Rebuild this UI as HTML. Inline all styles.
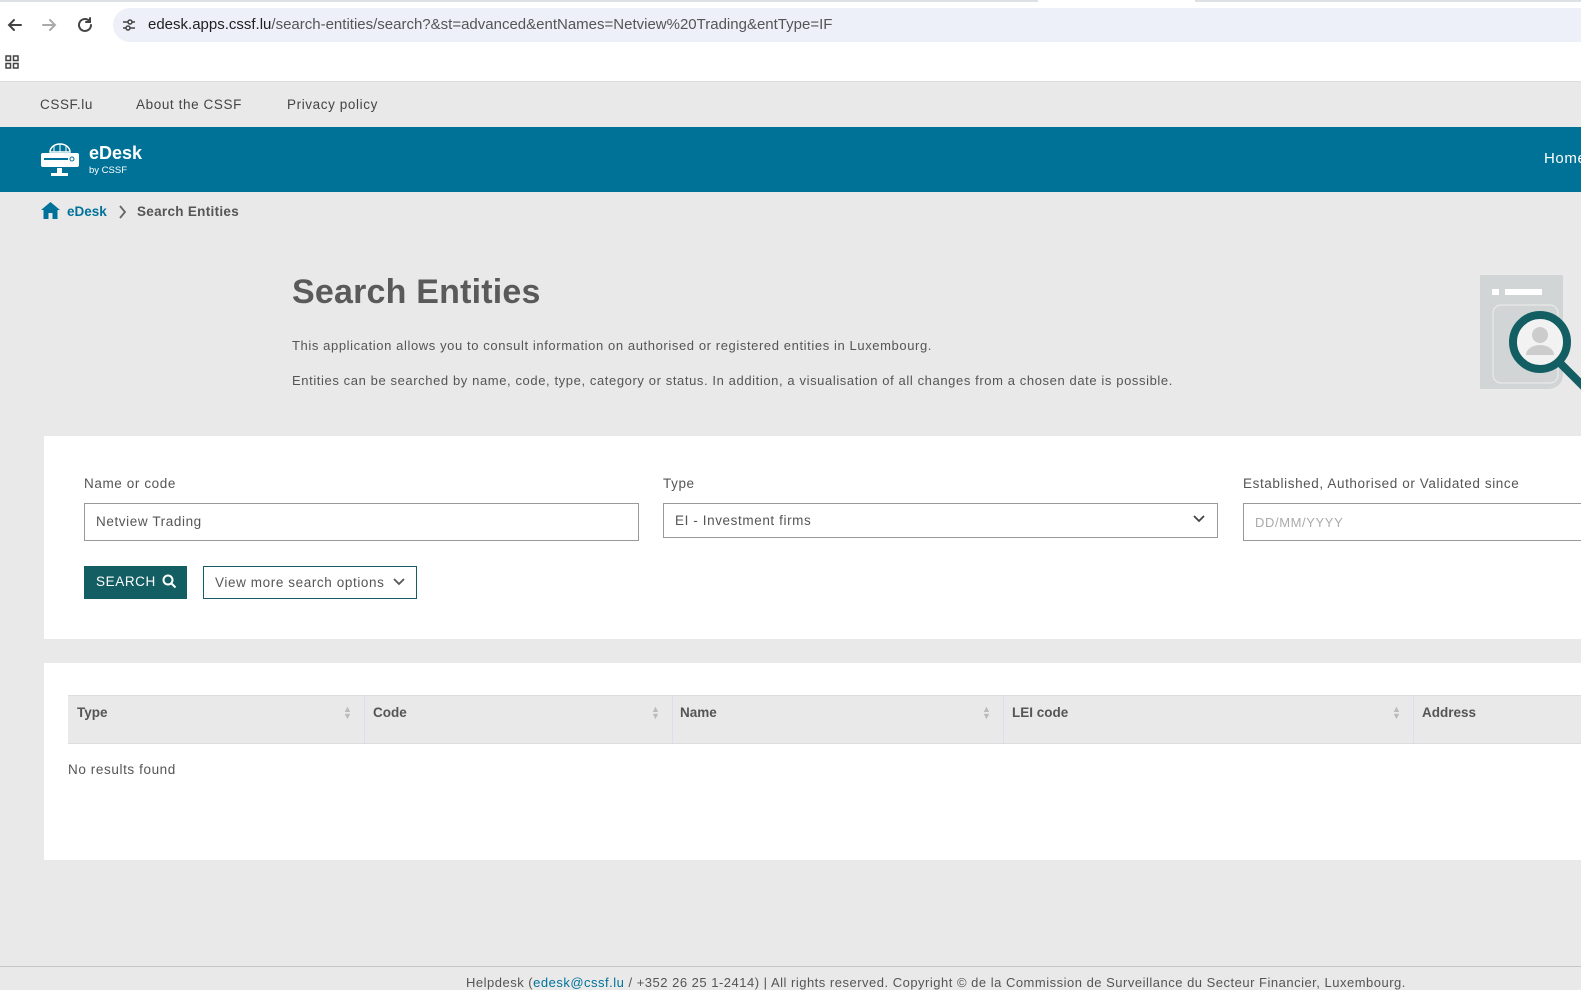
<!DOCTYPE html>
<html><head><meta charset="utf-8"><style>
*{box-sizing:border-box;margin:0;padding:0}
body{width:1581px;height:990px;overflow:hidden;background:#e9e9e9;font-family:"Liberation Sans",sans-serif;color:#555;position:relative}
.abs{position:absolute}
.ls{letter-spacing:.6px}
</style></head><body>
<div class="abs" style="left:0;top:0;width:1581px;height:82px;background:#fff;border-bottom:1px solid #ddd"></div>
<div class="abs" style="left:0;top:0;width:1038px;height:2px;background:#dde1e6"></div>
<div class="abs" style="left:1195px;top:0;width:386px;height:2px;background:#dde1e6"></div>
<div class="abs" style="left:113px;top:8px;width:1468px;height:34px;background:#edf0f9;border-radius:17px 0 0 17px"></div>
<svg class="abs" style="left:6px;top:16px" width="90" height="18" fill="none" stroke-width="2" stroke-linecap="round"><path d="M15 9H3M8 4L3 9l5 5" stroke="#444"/><path d="M37 9h12M44 4l5 5-5 5" stroke="#aaa"/><path d="M85 9a6 6 0 1 1-2-4.5M84 2v4h-4" stroke="#444"/></svg>
<svg class="abs" style="left:121px;top:17px" width="16" height="16" fill="none" stroke="#444" stroke-width="1.5"><path d="M2 5h5M11 5h3M2 11h3M9 11h5"/><circle cx="9" cy="5" r="2"/><circle cx="7" cy="11" r="2"/></svg>
<div class="abs" style="left:148px;top:16px;font-size:15px;color:#1f1f1f">edesk.apps.cssf.lu<span style="color:#555">/search-entities/search?&amp;st=advanced&amp;entNames=Netview%20Trading&amp;entType=IF</span></div>
<svg class="abs" style="left:5px;top:55px" width="14" height="14" fill="none" stroke="#444" stroke-width="1.5"><rect x="1" y="1" width="4.5" height="4.5"/><rect x="8.5" y="1" width="4.5" height="4.5"/><rect x="1" y="8.5" width="4.5" height="4.5"/><rect x="8.5" y="8.5" width="4.5" height="4.5"/></svg>

<div class="abs ls" style="left:40px;top:97px;font-size:13.5px;color:#444">CSSF.lu</div>
<div class="abs ls" style="left:136px;top:97px;font-size:13.5px;color:#444">About the CSSF</div>
<div class="abs ls" style="left:287px;top:97px;font-size:13.5px;color:#444">Privacy policy</div>

<div class="abs" style="left:0;top:127px;width:1581px;height:65px;background:#007297"></div>
<svg class="abs" style="left:40px;top:143px" width="40" height="35" fill="#fff"><path d="M10 9a10 8 0 0 1 20 0z" fill="none" stroke="#fff" stroke-width="1.5"/><path d="M20 1v8M14 2v7M26 2v7" stroke="#fff" stroke-width="1"/><rect x="1" y="10" width="38" height="14" rx="2"/><rect x="4" y="15" width="24" height="2" fill="#007297"/><circle cx="32" cy="16" r="2" fill="none" stroke="#007297"/><rect x="17" y="25" width="5" height="5"/><rect x="11" y="30" width="17" height="3"/></svg>
<div class="abs" style="left:89px;top:143px;font-size:18px;font-weight:bold;color:#fff">eDesk</div>
<div class="abs" style="left:89px;top:165px;font-size:9.5px;color:#fff">by CSSF</div>
<div class="abs ls" style="left:1544px;top:150px;font-size:15px;color:#fff">Home</div>

<svg class="abs" style="left:41px;top:202px" width="19" height="17" fill="#00729a"><path d="M9.5 0L0 8h2.5v9h5v-6h4v6h5V8H19z"/></svg>
<div class="abs" style="left:67px;top:204px;font-size:13.5px;font-weight:bold;color:#00729a">eDesk</div>
<svg class="abs" style="left:119px;top:205px" width="8" height="14" fill="none" stroke="#666" stroke-width="1.8"><path d="M1 1l5 6-5 6"/></svg>
<div class="abs" style="left:137px;top:204px;font-size:13.5px;font-weight:bold;color:#555;letter-spacing:.3px">Search Entities</div>

<div class="abs" style="left:292px;top:273px;font-size:34px;font-weight:bold;color:#5a5a5a;letter-spacing:.2px">Search Entities</div>
<div class="abs ls" style="left:292px;top:338px;font-size:13px;color:#555">This application allows you to consult information on authorised or registered entities in Luxembourg.</div>
<div class="abs ls" style="left:292px;top:373px;font-size:13px;color:#555">Entities can be searched by name, code, type, category or status. In addition, a visualisation of all changes from a chosen date is possible.</div>
<svg class="abs" style="left:1480px;top:275px" width="101" height="118"><path d="M0 0h83v100a14 14 0 0 1-14 14H0z" fill="#d2d5d6"/><rect x="12" y="14" width="7" height="6" fill="#fff"/><rect x="25" y="14" width="37" height="6" fill="#fff"/><rect x="13" y="30" width="65" height="78" rx="8" fill="none" stroke="#eee" stroke-width="1"/><circle cx="60" cy="67" r="27" fill="#f2f2f2" stroke="#135e63" stroke-width="8"/><circle cx="60" cy="60" r="8" fill="#ccc"/><path d="M46 80a14 10 0 0 1 28 0z" fill="#ccc"/><path d="M79 87l25 25" stroke="#135e63" stroke-width="8"/></svg>

<div class="abs" style="left:44px;top:436px;width:1537px;height:203px;background:#fff"></div>
<div class="abs ls" style="left:84px;top:476px;font-size:13.5px;color:#555">Name or code</div>
<div class="abs ls" style="left:84px;top:503px;width:555px;height:38px;border:1px solid #999;font-size:13.5px;padding:10px 0 0 11px;color:#555">Netview Trading</div>
<div class="abs ls" style="left:663px;top:476px;font-size:13.5px;color:#555">Type</div>
<div class="abs ls" style="left:663px;top:503px;width:555px;height:35px;border:1px solid #999;font-size:13.5px;padding:9px 0 0 11px;color:#555">EI - Investment firms</div>
<svg class="abs" style="left:1193px;top:515px" width="12" height="8" fill="none" stroke="#444" stroke-width="1.8"><path d="M1 1l5 5 5-5"/></svg>
<div class="abs ls" style="left:1243px;top:476px;font-size:13.5px;color:#555">Established, Authorised or Validated since</div>
<div class="abs ls" style="left:1243px;top:503px;width:360px;height:38px;border:1px solid #999;font-size:13px;padding:11px 0 0 11px;color:#aaa">DD/MM/YYYY</div>
<div class="abs ls" style="left:84px;top:566px;width:103px;height:33px;background:#135e63;color:#fff;font-size:13.5px;padding:8px 0 0 12px">SEARCH</div>
<svg class="abs" style="left:162px;top:574px" width="15" height="15" fill="none" stroke="#fff" stroke-width="2"><circle cx="6" cy="6" r="4.5"/><path d="M9.5 9.5l4 4"/></svg>
<div class="abs ls" style="left:203px;top:566px;width:214px;height:33px;border:1px solid #135e63;font-size:13.5px;padding:8px 0 0 11px;color:#555">View more search options</div>
<svg class="abs" style="left:393px;top:578px" width="12" height="8" fill="none" stroke="#555" stroke-width="1.8"><path d="M1 1l5 5 5-5"/></svg>

<div class="abs" style="left:44px;top:663px;width:1537px;height:197px;background:#fff"></div>
<div class="abs" style="left:68px;top:695px;width:1513px;height:49px;background:#e9e9e9;border-top:1px solid #ddd;border-bottom:1px solid #ddd"></div>
<div class="abs" style="left:364px;top:696px;width:1px;height:47px;background:#dde"></div>
<div class="abs" style="left:672px;top:696px;width:1px;height:47px;background:#dde"></div>
<div class="abs" style="left:1003px;top:696px;width:1px;height:47px;background:#dde"></div>
<div class="abs" style="left:1413px;top:696px;width:1px;height:47px;background:#dde"></div>
<div class="abs" style="left:77px;top:705px;font-size:13.5px;font-weight:bold;color:#555">Type</div>
<div class="abs" style="left:373px;top:705px;font-size:13.5px;font-weight:bold;color:#555">Code</div>
<div class="abs" style="left:680px;top:705px;font-size:13.5px;font-weight:bold;color:#555">Name</div>
<div class="abs" style="left:1012px;top:705px;font-size:13.5px;font-weight:bold;color:#555">LEI code</div>
<div class="abs" style="left:1422px;top:705px;font-size:13.5px;font-weight:bold;color:#555">Address</div>
<div class="abs" style="left:343px;top:706px;font-size:9px;line-height:7px;color:#bbb">▲<br>▼</div>
<div class="abs" style="left:651px;top:706px;font-size:9px;line-height:7px;color:#bbb">▲<br>▼</div>
<div class="abs" style="left:982px;top:706px;font-size:9px;line-height:7px;color:#bbb">▲<br>▼</div>
<div class="abs" style="left:1392px;top:706px;font-size:9px;line-height:7px;color:#bbb">▲<br>▼</div>
<div class="abs ls" style="left:68px;top:762px;font-size:13.5px;color:#555">No results found</div>

<div class="abs" style="left:0;top:966px;width:1581px;height:1px;background:#c6c6c6"></div>
<div class="abs" style="left:466px;top:975px;font-size:13px;color:#555;white-space:nowrap;letter-spacing:.5px">Helpdesk (<span style="color:#00729a">edesk@cssf.lu</span> / +352 26 25 1-2414) | All rights reserved. Copyright © de la Commission de Surveillance du Secteur Financier, Luxembourg.</div>
</body></html>
